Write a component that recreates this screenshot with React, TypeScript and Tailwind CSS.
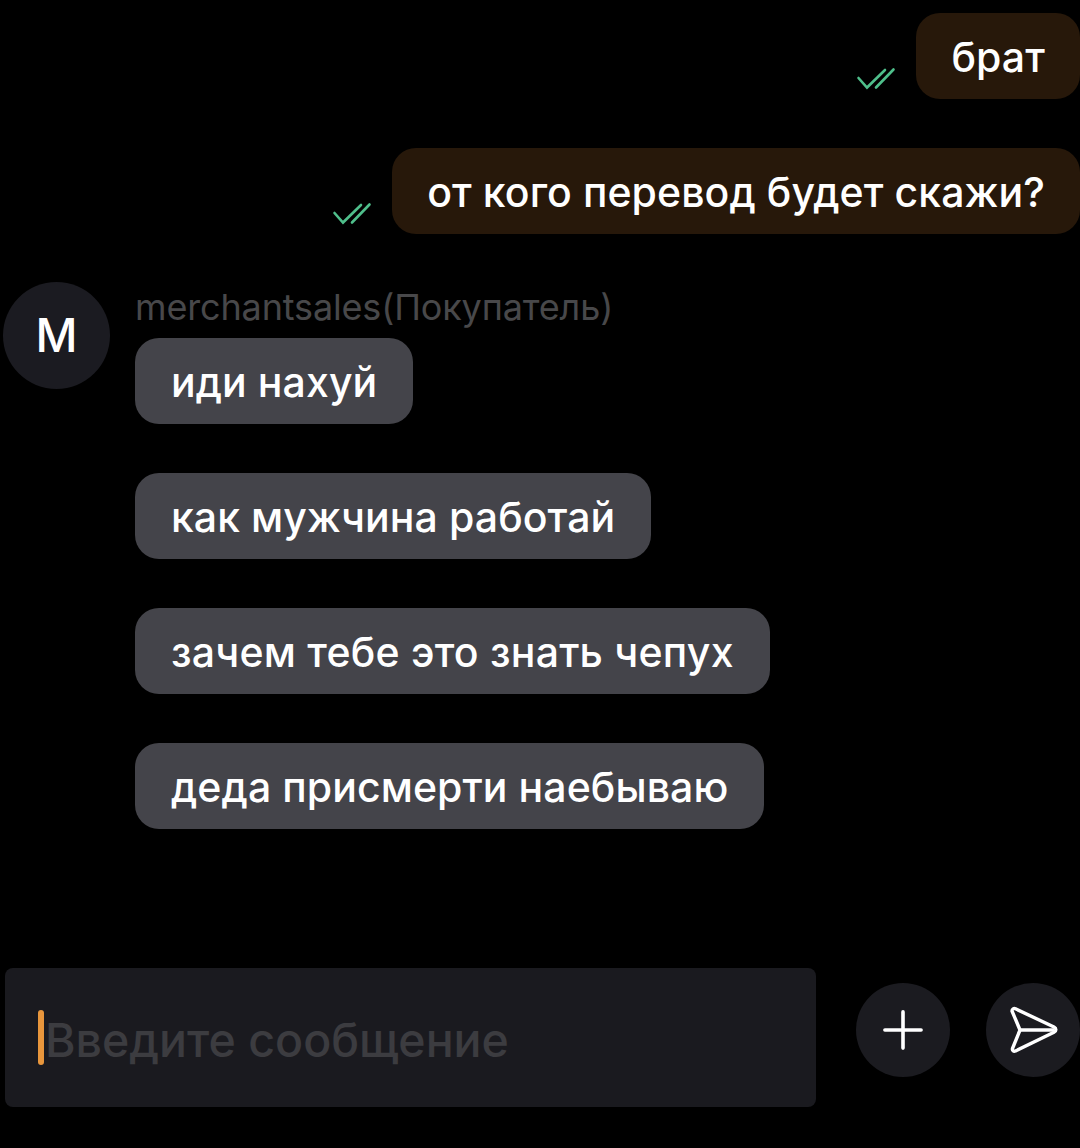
import { Plus } from "lucide-react";

const font = "font-['Inter','Noto_Sans',sans-serif]";

const Ticks = () => (
  <svg width="40" height="24" viewBox="0 0 40 24" fill="none" stroke="#4fbf8b" strokeWidth="2.6" strokeLinecap="round">
    <path d="M2.500 11l8.500 9.500L29 3" />
    <path d="M20 20.500L37.500 2.500" />
  </svg>
);

const Outgoing = ({ text }: { text: string }) => (
  <div className="flex justify-end">
    <div className="mr-[20px] mt-[54px]">
      <Ticks />
    </div>
    <div className="h-[86px] flex items-center rounded-[24px] bg-[#27180a] pl-[35px] pr-[35px] pt-[4px] text-[41px] font-medium tracking-[0.08px] text-white">
      {text}
    </div>
  </div>
);

const Incoming = ({ text, wide }: { text: string; wide?: boolean }) => (
  <div className="flex">
    <div
      className={`h-[86px] flex items-center rounded-[24px] bg-[#44444a] px-9 pt-[4px] text-[41px] font-medium text-white ${
        wide ? "tracking-[0.22px]" : "tracking-[0.08px]"
      }`}
    >
      {text}
    </div>
  </div>
);

export default function App() {
  return (
    <div className={`${font} h-[1148px] w-[1080px] overflow-hidden bg-black pt-[13px]`}>
      <div className="flex flex-col gap-[49px]">
        <Outgoing text="брат" />
        <Outgoing text="от кого перевод будет скажи?" />
      </div>

      <div className="mt-[48px] flex pl-[3px]">
        <div className="flex h-[107px] w-[107px] shrink-0 items-center justify-center rounded-full bg-[#1b1b21] text-[46px] font-medium text-white">
          M
        </div>
        <div className="ml-[25px] flex flex-col">
          <div className="h-[56px] text-[36px] leading-[50px] tracking-[-0.15px] text-[#48484a]">
            merchantsales(Покупатель)
          </div>
          <div className="flex flex-col gap-[49px]">
            <Incoming text="иди нахуй" />
            <Incoming text="как мужчина работай" />
            <Incoming text="зачем тебе это знать чепух" wide />
            <Incoming text="деда присмерти наебываю" />
          </div>
        </div>
      </div>

      <div className="mt-[139px] flex items-start pl-[5px]">
        <div className="flex h-[139px] w-[811px] items-center rounded-[8px] bg-[#1a1a1f] pl-[33px]">
          <div className="h-[55px] w-[6px] rounded-full bg-[#e8963c]" />
          <span className="ml-[1px] pt-[7px] text-[46.5px] font-medium text-[#3c3c40]">Введите сообщение</span>
        </div>
        <div className="ml-[40px] mt-[15px] flex h-[94px] w-[94px] items-center justify-center rounded-full bg-[#1b1b20] text-white">
          <Plus size={62} strokeWidth={1.4} />
        </div>
        <div className="ml-[36px] mt-[15px] flex h-[94px] w-[94px] items-center justify-center rounded-full bg-[#1b1b20]">
          <svg width="50" height="50" viewBox="0 0 50 50" fill="none" stroke="white" strokeWidth="3.4" strokeLinejoin="round">
            <path d="M4 6c0-2 1.800-3 3.500-2.200L46 22c2.500 1.300 2.500 4 0 5.200L7.500 46c-2 .8-3.500-.5-3-2.500L12 25 4 6z" />
            <path d="M12 25h34" />
          </svg>
        </div>
      </div>
    </div>
  );
}
